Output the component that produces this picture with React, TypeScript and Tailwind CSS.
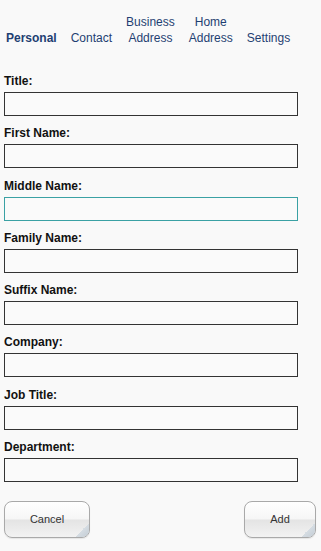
import React from "react";

const tabs = [
  { top: "", bottom: "Personal", active: true },
  { top: "", bottom: "Contact" },
  { top: "Business", bottom: "Address" },
  { top: "Home", bottom: "Address" },
  { top: "", bottom: "Settings" },
];

const fields = [
  "Title:",
  "First Name:",
  "Middle Name:",
  "Family Name:",
  "Suffix Name:",
  "Company:",
  "Job Title:",
  "Department:",
];

const GlossButton = ({ label, width }: { label: string; width: string }) => (
  <button
    className={`relative h-[37px] ${width} overflow-hidden rounded-[8px] border border-[#a9a9a9] bg-[linear-gradient(to_bottom,#ffffff_0%,#f6f6f6_48%,#e4e4e4_52%,#f2f2f2_100%)] text-[11px] text-[#333] shadow-[0_1px_1px_rgba(0,0,0,0.08)]`}
  >
    {label}
    <span className="absolute bottom-0 right-0 h-[14px] w-[14px] bg-[linear-gradient(135deg,transparent_50%,#d6dde3_50%,#c3ccd4_100%)]" />
  </button>
);

const App = () => {
  return (
    <div className="min-h-[551px] w-[321px] bg-[#f9f9f9] font-['Liberation_Sans',Arial,sans-serif]">
      <nav className="flex items-end gap-[14px] pl-[6px] pt-[14px] text-[12px] leading-[16px] text-[#1f3f72]">
        {tabs.map((t, i) => (
          <div
            key={i}
            className={`flex flex-col items-center ${t.active ? "font-bold" : ""}`}
          >
            {t.top && <span>{t.top}</span>}
            <span>{t.bottom}</span>
          </div>
        ))}
      </nav>

      <form className="mt-[28px] flex flex-col gap-[10.3px] px-[4px]">
        {fields.map((f) => (
          <label key={f} className="flex flex-col">
            <span className="mb-[4px] text-[12px] font-bold leading-[14px] text-[#111]">
              {f}
            </span>
            <input
              className={`h-[24px] w-[294px] border bg-[#fafafa] outline-none ${
                f === "Middle Name:" ? "border-[#3aa1a4]" : "border-[#333]"
              }`}
            />
          </label>
        ))}
      </form>

      <div className="mt-[19px] flex justify-between pl-[4px] pr-[5px]">
        <GlossButton label="Cancel" width="w-[86px]" />
        <GlossButton label="Add" width="w-[72px]" />
      </div>
    </div>
  );
};

export default App;
